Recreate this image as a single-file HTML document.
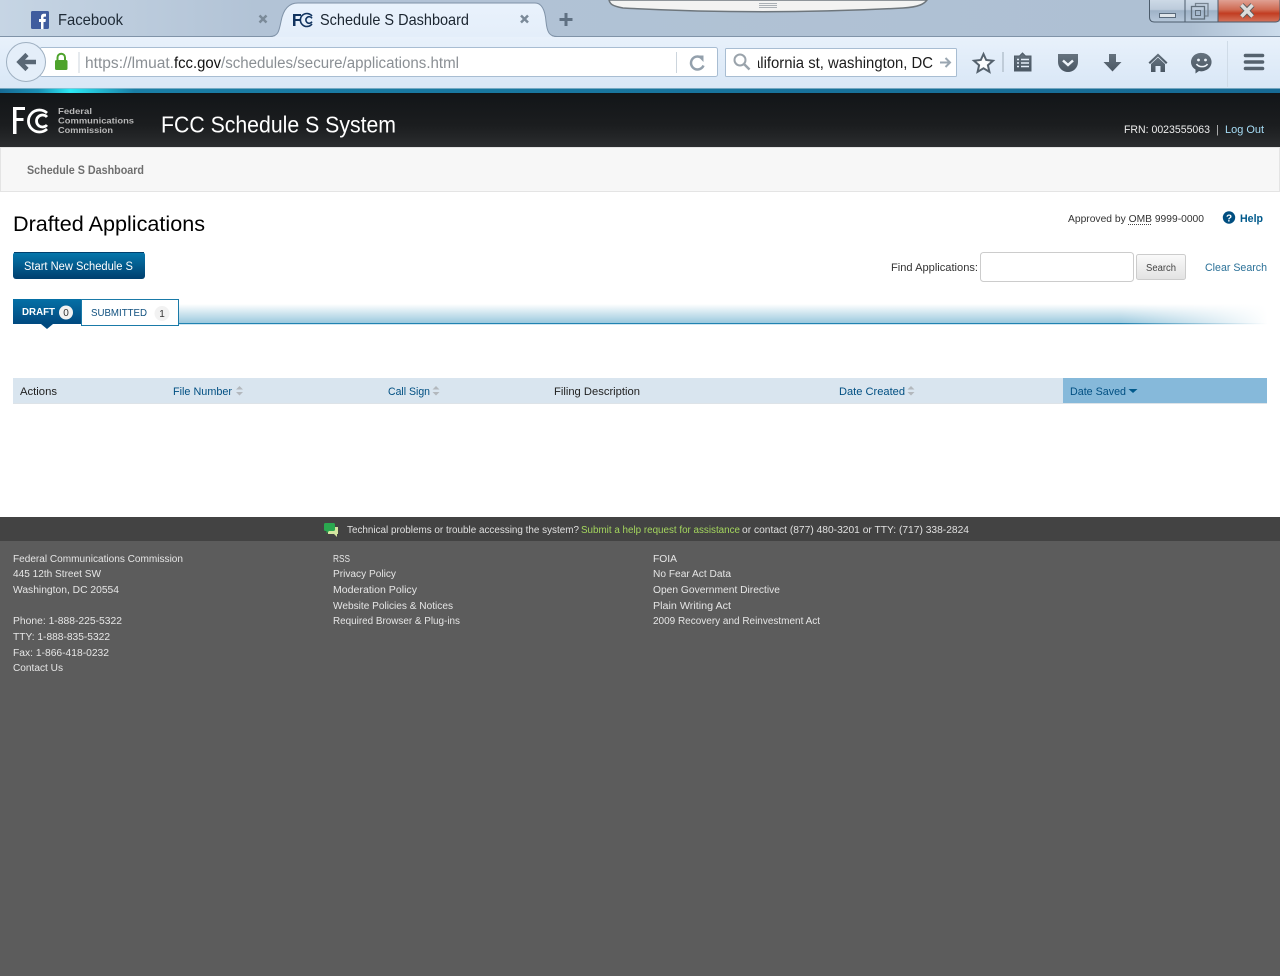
<!DOCTYPE html>
<html lang="en"><head><meta charset="utf-8"><title>Schedule S Dashboard</title>
<style>
html,body{margin:0;padding:0;background:#5c5c5c;width:1280px;height:976px;overflow:hidden}
svg{display:block}
text{font-family:"Liberation Sans",sans-serif;white-space:pre}
.ft{font-size:10px;fill:#e6e6e6}
.th{font-size:11px;fill:#222}
.tl{font-size:11px;fill:#004f82;font-weight:normal}
</style></head><body>
<svg xmlns="http://www.w3.org/2000/svg" width="1280" height="976" viewBox="0 0 1280 976">
<defs>
<linearGradient id="tb" x1="0" x2="1" y1="0" y2="0"><stop offset="0" stop-color="#c6d5e4"/><stop offset=".2" stop-color="#b2c3d6"/><stop offset=".93" stop-color="#aec0d3"/><stop offset="1" stop-color="#cbdbeb"/></linearGradient>
<linearGradient id="nav" x1="0" x2="0" y1="0" y2="1"><stop offset="0" stop-color="#e8f1fb"/><stop offset="1" stop-color="#d9e7f6"/></linearGradient>
<linearGradient id="tab" x1="0" x2="0" y1="0" y2="1"><stop offset="0" stop-color="#e9f2fc"/><stop offset="1" stop-color="#e4eefa"/></linearGradient>
<linearGradient id="hd" x1="0" x2="0" y1="0" y2="1"><stop offset="0" stop-color="#121518"/><stop offset=".6" stop-color="#1b1d1f"/><stop offset="1" stop-color="#2b2d2f"/></linearGradient>
<linearGradient id="line" x1="0" x2="1" y1="0" y2="0"><stop offset="0" stop-color="#176a94"/><stop offset=".03" stop-color="#1a8fb4"/><stop offset=".055" stop-color="#2ce8f4"/><stop offset=".105" stop-color="#1a7ea6"/><stop offset="1" stop-color="#176a94"/></linearGradient>
<linearGradient id="btn" x1="0" x2="0" y1="0" y2="1"><stop offset="0" stop-color="#0678ad"/><stop offset="1" stop-color="#003f6e"/></linearGradient>
<linearGradient id="draft" x1="0" x2="0" y1="0" y2="1"><stop offset="0" stop-color="#0570a6"/><stop offset="1" stop-color="#00497f"/></linearGradient>
<linearGradient id="sb" x1="0" x2="0" y1="0" y2="1"><stop offset="0" stop-color="#fafafa"/><stop offset="1" stop-color="#e2e2e2"/></linearGradient>
<linearGradient id="glowV" x1="0" x2="0" y1="0" y2="1"><stop offset="0" stop-color="#fff"/><stop offset="1" stop-color="#9cc9de"/></linearGradient>
<linearGradient id="fadeR" x1="0" x2="1" y1="0" y2="0"><stop offset="0" stop-color="#fff" stop-opacity="0"/><stop offset="1" stop-color="#fff"/></linearGradient>
<linearGradient id="cls" x1="0" x2="0" y1="0" y2="1"><stop offset="0" stop-color="#e0a193"/><stop offset=".45" stop-color="#cf6a52"/><stop offset=".62" stop-color="#c23d22"/><stop offset="1" stop-color="#d37159"/></linearGradient>
<linearGradient id="mn" x1="0" x2="0" y1="0" y2="1"><stop offset="0" stop-color="#d2deea"/><stop offset=".5" stop-color="#bccbdb"/><stop offset=".55" stop-color="#9fb2c7"/><stop offset="1" stop-color="#b6c8da"/></linearGradient>
<linearGradient id="ic" x1="0" x2="0" y1="0" y2="1"><stop offset="0" stop-color="#66737f"/><stop offset="1" stop-color="#4a5763"/></linearGradient>
</defs>

<!-- tab strip -->
<rect width="1280" height="37" fill="url(#tb)"/>
<rect y="36" width="1280" height="1" fill="#8093a8"/>
<!-- facebook tab -->
<rect x="31" y="11" width="18" height="18" rx="1.500" fill="#3f5c9e"/>
<path d="M41 29v-7h-2v-3h2v-2.200c0-2 1.200-3 3-3h2v2.800h-1.300c-.9 0-1.200.4-1.200 1.200V19h2.400l-.4 3h-2v7z" fill="#fff"/>
<text x="58" y="25" font-size="16" fill="#1e2a36" textLength="65" lengthAdjust="spacingAndGlyphs">Facebook</text>
<path d="M259.500 15.500l7 7m0-7l-7 7" stroke="#7b8a99" stroke-width="2.500"/>
<!-- active tab -->
<path d="M270 37c8 0 9-5 11-15 2-11 7-19 17-19h237c6 0 10 6 11 19 1 10 3 15 11 15z" fill="url(#tab)"/>
<path d="M270 36.500c8 0 9-5 11-15 2-11 7-18.500 17-18.500h237c6 0 10 6 11 18.500 1 10 3 15 11 15" fill="none" stroke="#7f92a7"/>
<path d="M293 26V14h8v2h-5.500v3h4.500v2h-4.500v5z" fill="#12345f"/>
<path d="M312 16a6.500 6.500 0 1 0 0 8M312 18.300a3.300 3.300 0 1 0 0 3.400" fill="none" stroke="#12345f" stroke-width="1.600"/>
<text x="320" y="25" font-size="16" fill="#1b2530" textLength="149" lengthAdjust="spacingAndGlyphs">Schedule S Dashboard</text>
<path d="M521 15.500l7 7m0-7l-7 7" stroke="#7b8a99" stroke-width="2.500"/>
<path d="M566 13v13M559.500 19.500h13" stroke="#5f7082" stroke-width="3"/>
<!-- top drop tab -->
<path d="M609 0c1 4 3 6 14 8 90 5 190 5 280 0 16-1 21-4 24-8z" fill="#f3f3f2" stroke="#6e767c" stroke-width="1.500"/>
<path d="M759 3.500h18M759 5.500h18M759 7.500h18" stroke="#aab0b5"/>
<!-- window controls -->
<rect x="1149.500" y="-3" width="36" height="25" fill="url(#mn)"/>
<rect x="1185" y="-3" width="33" height="25" fill="url(#mn)"/>
<rect x="1218" y="0" width="61.500" height="21.500" fill="url(#cls)"/>
<path d="M1149.500 0v17q0 5 5 5h121q4.500 0 4.500-5V0" fill="none" stroke="#4c5c6c"/>
<path d="M1185 0v22M1218 0v22" stroke="#4c5c6c"/>
<rect x="1159.500" y="13.500" width="16" height="4" fill="#dfe5ea" stroke="#596a7b"/>
<path d="M1195.500 6V3.500h12.500v12.500h-3" fill="none" stroke="#76838f" stroke-width="1.300"/>
<rect x="1191.500" y="6.500" width="13" height="12.500" fill="none" stroke="#606e7b" stroke-width="1.300"/>
<rect x="1195.500" y="10.500" width="5" height="5" fill="none" stroke="#606e7b"/>
<path d="M1241.500 5l11 11.500m0-11.500l-11 11.500" stroke="#5a5a5a" stroke-width="5.500"/>
<path d="M1241.500 5l11 11.500m0-11.500l-11 11.500" stroke="#dcdcdc" stroke-width="3.600"/>

<!-- nav bar -->
<rect y="37" width="1280" height="51" fill="url(#nav)"/>
<rect x="40" y="47.500" width="677.500" height="29" rx="2" fill="#fff" stroke="#a8bdd2"/>
<path d="M79 52v21" stroke="#ccd5dd"/><path d="M676.500 52v21" stroke="#ccd5dd"/>
<circle cx="26" cy="62" r="19.500" fill="#e4eef9" stroke="#9fb0c1"/>
<path d="M20 62h16M27 54.500l-7.500 7.500 7.500 7.500" fill="none" stroke="#596775" stroke-width="4.500"/>
<rect x="55" y="60" width="12.500" height="10" rx="1.500" fill="#4ea32c"/>
<path d="M57.500 61v-3.500a3.700 3.700 0 0 1 7.500 0V61" fill="none" stroke="#4ea32c" stroke-width="2"/>
<text x="85" y="68" font-size="15.500" fill="#8a8f94" textLength="89" lengthAdjust="spacingAndGlyphs">https://lmuat.</text>
<text x="174" y="68" font-size="15.500" fill="#111" textLength="47" lengthAdjust="spacingAndGlyphs">fcc.gov</text>
<text x="221" y="68" font-size="15.500" fill="#8a8f94" textLength="238" lengthAdjust="spacingAndGlyphs">/schedules/secure/applications.html</text>
<path d="M701 57.500a6.500 6.500 0 1 0 2.500 8" fill="none" stroke="#93a0ac" stroke-width="2.500"/><path d="M697 55.500h6.500V62z" fill="#93a0ac"/>
<rect x="725.500" y="48.500" width="231" height="28" rx="1" fill="#fff" stroke="#a8bdd2"/>
<text x="752" y="68" font-size="15.500" fill="#1c1c1c" textLength="181" lengthAdjust="spacingAndGlyphs">alifornia st, washington, DC</text>
<rect x="727" y="50" width="31" height="25" fill="#fff"/>
<circle cx="740" cy="60" r="5.500" fill="none" stroke="#9aa3ab" stroke-width="2"/><path d="M744 64l5.500 5.500" stroke="#9aa3ab" stroke-width="2.500"/>
<path d="M940 62.500h9M945.500 58l4.500 4.500-4.500 4.500" fill="none" stroke="#9aa6b1" stroke-width="2"/>
<!-- toolbar icons -->
<path d="M983.500 54l2.700 6 6.800.7-5.100 4.500 1.500 6.600-5.900-3.500-5.900 3.500 1.500-6.600-5.100-4.500 6.800-.7z" fill="#fafcfe" stroke="#55626e" stroke-width="2"/>
<path d="M1003 52v20" stroke="#b5c2ce" stroke-width="1.500"/>
<path d="M1014.500 56h5l3-3 3 3h5.500v15h-16.500z" fill="url(#ic)" stroke="#4f5c68"/>
<path d="M1017 59.500h2m2 0h8m-12 3.500h2m2 0h8m-12 3.500h2m2 0h8" stroke="#e4eef9" stroke-width="1.400"/>
<path d="M1058 54h20v8a10 10 0 0 1-20 0z" fill="url(#ic)"/>
<path d="M1063 60.500l5 4.500 5-4.500" fill="none" stroke="#eef4fa" stroke-width="2.500"/>
<path d="M1109 54h7v8h5.500l-9 9.500-9-9.500h5.500z" fill="url(#ic)"/>
<path d="M1148.500 62.500l9.500-9 9.500 9-1.500 1.500-8-7.500-8 7.500z" fill="url(#ic)"/><path d="M1151 64l7-6.500 7 6.500v8h-4.500v-6h-5v6H1151z" fill="url(#ic)"/>
<path d="M1202 53a9.800 9 0 0 1 3 17.500c-2 1-4 1-6 .5l-3.500 2.500v-4a9.800 9 0 0 1 6.500-16.500z" fill="url(#ic)"/>
<circle cx="1198.500" cy="60" r="1.400" fill="#eef4fa"/><circle cx="1205.500" cy="60" r="1.400" fill="#eef4fa"/>
<path d="M1196.500 64c2 3.500 9 3.500 11 0" fill="none" stroke="#eef4fa" stroke-width="1.600"/>
<path d="M1227.500 41v46" stroke="#cfdbe7"/>
<path d="M1245.500 55.500h17M1245.500 62h17M1245.500 68.500h17" stroke="#55626e" stroke-width="3.600" stroke-linecap="round"/>

<!-- blue line -->
<rect y="88" width="1280" height="5" fill="url(#line)"/>
<rect y="88" width="1280" height="1" fill="#9dbfd2" opacity=".7"/>
<!-- header -->
<rect y="93" width="1280" height="54" fill="url(#hd)"/>
<path d="M13 134v-27h12v3h-8.500v8h7v3h-7v13z" fill="#fff"/>
<path d="M47 113a11 11 0 1 0 0 16M47 117a6 6 0 1 0 0 8" fill="none" stroke="#fff" stroke-width="2.800"/>
<text x="58" y="114" font-size="8.500" font-weight="bold" fill="#b8b8b8" textLength="34" lengthAdjust="spacingAndGlyphs">Federal</text>
<text x="58" y="123.500" font-size="8.500" font-weight="bold" fill="#b8b8b8" textLength="76" lengthAdjust="spacingAndGlyphs">Communications</text>
<text x="58" y="133" font-size="8.500" font-weight="bold" fill="#b8b8b8" textLength="55" lengthAdjust="spacingAndGlyphs">Commission</text>
<text x="161" y="132.500" font-size="23" fill="#fff" textLength="235" lengthAdjust="spacingAndGlyphs">FCC Schedule S System</text>
<text x="1124" y="133" font-size="11" fill="#eee" textLength="86" lengthAdjust="spacingAndGlyphs">FRN: 0023555063</text>
<text x="1216" y="133" font-size="11" fill="#bbb">|</text>
<text x="1225" y="133" font-size="11" fill="#a6dcf5" textLength="39" lengthAdjust="spacingAndGlyphs">Log Out</text>

<!-- subnav -->
<rect y="147" width="1280" height="45" fill="#fff"/>
<rect x=".5" y="147.500" width="1279" height="44" fill="#f7f7f7" stroke="#e4e4e4"/>
<text x="27" y="174" font-size="11.500" font-weight="bold" fill="#6e6e6e" textLength="117" lengthAdjust="spacingAndGlyphs">Schedule S Dashboard</text>

<!-- content -->
<rect y="192" width="1280" height="325" fill="#fff"/>
<text x="13" y="231" font-size="21" fill="#000" textLength="192" lengthAdjust="spacingAndGlyphs">Drafted Applications</text>
<text x="1068" y="222" font-size="10" fill="#333" textLength="136" lengthAdjust="spacingAndGlyphs">Approved by OMB 9999-0000</text>
<path d="M1128 224.500h23" stroke="#444" stroke-dasharray="1 1"/>
<circle cx="1229" cy="217.500" r="6.200" fill="#004e80"/>
<text x="1229" y="221.500" font-size="10" font-weight="bold" fill="#fff" text-anchor="middle">?</text>
<text x="1240" y="222" font-size="11" font-weight="bold" fill="#005a8c" textLength="23" lengthAdjust="spacingAndGlyphs">Help</text>

<rect x="13" y="252" width="132" height="27" rx="3" fill="url(#btn)"/>
<rect x="14" y="252" width="130" height="1" fill="#00406e"/>
<text x="24" y="270" font-size="11.500" fill="#fff" textLength="109" lengthAdjust="spacingAndGlyphs">Start New Schedule S</text>

<text x="891" y="271" font-size="11" fill="#333" textLength="87" lengthAdjust="spacingAndGlyphs">Find Applications:</text>
<rect x="980.500" y="252.500" width="153" height="29" rx="3" fill="#fff" stroke="#ccc"/>
<rect x="1136.500" y="254.500" width="49" height="25" rx="2" fill="url(#sb)" stroke="#ccc"/>
<text x="1146" y="271" font-size="10" fill="#444" textLength="30" lengthAdjust="spacingAndGlyphs">Search</text>
<text x="1205" y="271" font-size="11" fill="#2b7198" textLength="62" lengthAdjust="spacingAndGlyphs">Clear Search</text>

<!-- tab band -->
<rect x="178" y="304" width="1089" height="19" fill="url(#glowV)"/>
<rect x="178" y="323" width="1089" height="1.200" fill="#2083b2"/>
<rect x="1120" y="303" width="148" height="22" fill="url(#fadeR)"/>
<rect x="13" y="299" width="68" height="25" fill="url(#draft)"/>
<path d="M41 324h12l-6 5z" fill="#00497f"/>
<text x="22" y="315" font-size="10.500" fill="#fff" font-weight="bold" textLength="33" lengthAdjust="spacingAndGlyphs">DRAFT</text>
<circle cx="66" cy="312.500" r="7" fill="#f2f2f2"/>
<text x="66" y="316" font-size="10" fill="#333" text-anchor="middle">0</text>
<rect x="81.500" y="299.500" width="97" height="26" fill="#fff" stroke="#1a7aa8"/>
<text x="91" y="316" font-size="10.500" fill="#0e4f7e" textLength="56" lengthAdjust="spacingAndGlyphs">SUBMITTED</text>
<circle cx="162" cy="313.500" r="7.500" fill="#f2f2f2"/>
<text x="162" y="317" font-size="10" fill="#333" text-anchor="middle">1</text>

<!-- table header -->
<rect x="13" y="378" width="1254" height="25" fill="#d9e5ef"/>
<rect x="13" y="403" width="1254" height="1" fill="#dde3e8"/>
<rect x="1063" y="378" width="204" height="25" fill="#86b9da"/>
<text x="20" y="395" class="th" textLength="37" lengthAdjust="spacingAndGlyphs">Actions</text>
<text x="173" y="395" class="tl" textLength="59" lengthAdjust="spacingAndGlyphs">File Number</text>
<path d="M236 389.500l3.500-3.500 3.500 3.500zM236 392l3.500 3.500 3.500-3.500z" fill="#b3b8bd"/>
<text x="388" y="395" class="tl" textLength="42" lengthAdjust="spacingAndGlyphs">Call Sign</text>
<path d="M432.500 389.500l3.500-3.500 3.500 3.500zM432.500 392l3.500 3.500 3.500-3.500z" fill="#b3b8bd"/>
<text x="554" y="395" class="th" textLength="86" lengthAdjust="spacingAndGlyphs">Filing Description</text>
<text x="839" y="395" class="tl" textLength="66" lengthAdjust="spacingAndGlyphs">Date Created</text>
<path d="M907.500 389.500l3.500-3.500 3.500 3.500zM907.500 392l3.500 3.500 3.500-3.500z" fill="#b3b8bd"/>
<text x="1070" y="395" class="tl" textLength="56" lengthAdjust="spacingAndGlyphs">Date Saved</text>
<path d="M1128.500 389h9l-4.500 4z" fill="#005a8c"/>

<!-- footer -->
<rect y="517" width="1280" height="24" fill="#434343"/>
<rect y="541" width="1280" height="435" fill="#5c5c5c"/>
<path d="M328 527h10v7h-1v3l-3-3h-6z" fill="#d4e6a0"/>
<path d="M325.500 523h8a1.500 1.500 0 0 1 1.500 1.500v5a1.500 1.500 0 0 1-1.500 1.500H329l-2.500 2.500V531h-1a1.500 1.500 0 0 1-1.500-1.500v-5a1.500 1.500 0 0 1 1.500-1.500z" fill="#2aa84f"/>
<text x="347" y="533" font-size="10" fill="#e0e0e0" textLength="232" lengthAdjust="spacingAndGlyphs">Technical problems or trouble accessing the system?</text>
<text x="581" y="533" font-size="10" fill="#a4d65e" textLength="159" lengthAdjust="spacingAndGlyphs">Submit a help request for assistance</text>
<text x="742" y="533" font-size="10" fill="#e0e0e0" textLength="227" lengthAdjust="spacingAndGlyphs">or contact (877) 480-3201 or TTY: (717) 338-2824</text>

<text x="13" y="562" class="ft" textLength="170" lengthAdjust="spacingAndGlyphs">Federal Communications Commission</text>
<text x="13" y="577" class="ft" textLength="88" lengthAdjust="spacingAndGlyphs">445 12th Street SW</text>
<text x="13" y="593" class="ft" textLength="106" lengthAdjust="spacingAndGlyphs">Washington, DC 20554</text>
<text x="13" y="624" class="ft" textLength="109" lengthAdjust="spacingAndGlyphs">Phone: 1-888-225-5322</text>
<text x="13" y="640" class="ft" textLength="97" lengthAdjust="spacingAndGlyphs">TTY: 1-888-835-5322</text>
<text x="13" y="656" class="ft" textLength="96" lengthAdjust="spacingAndGlyphs">Fax: 1-866-418-0232</text>
<text x="13" y="671" class="ft" textLength="50" lengthAdjust="spacingAndGlyphs">Contact Us</text>

<text x="333" y="562" class="ft" textLength="17" lengthAdjust="spacingAndGlyphs">RSS</text>
<text x="333" y="577" class="ft" textLength="63" lengthAdjust="spacingAndGlyphs">Privacy Policy</text>
<text x="333" y="593" class="ft" textLength="84" lengthAdjust="spacingAndGlyphs">Moderation Policy</text>
<text x="333" y="609" class="ft" textLength="120" lengthAdjust="spacingAndGlyphs">Website Policies &amp; Notices</text>
<text x="333" y="624" class="ft" textLength="127" lengthAdjust="spacingAndGlyphs">Required Browser &amp; Plug-ins</text>

<text x="653" y="562" class="ft" textLength="24" lengthAdjust="spacingAndGlyphs">FOIA</text>
<text x="653" y="577" class="ft" textLength="78" lengthAdjust="spacingAndGlyphs">No Fear Act Data</text>
<text x="653" y="593" class="ft" textLength="127" lengthAdjust="spacingAndGlyphs">Open Government Directive</text>
<text x="653" y="609" class="ft" textLength="78" lengthAdjust="spacingAndGlyphs">Plain Writing Act</text>
<text x="653" y="624" class="ft" textLength="167" lengthAdjust="spacingAndGlyphs">2009 Recovery and Reinvestment Act</text>
</svg>
</body></html>
